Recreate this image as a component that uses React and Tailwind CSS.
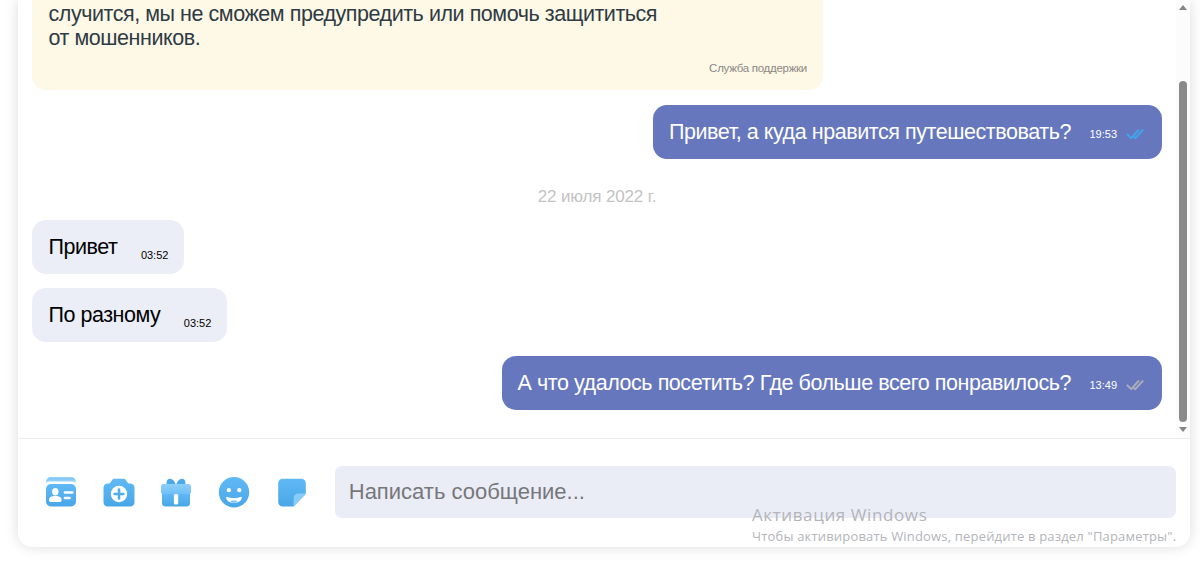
import { useState } from "react";

const supportLines = [
  "случится, мы не сможем предупредить или помочь защититься",
  "от мошенников."
];

function ProfileIcon() {
  return (
    <svg width="32" height="32" viewBox="0 0 32 32" fill="none">
      <path d="M1 6.800C1 3 2.800 1.200 6 1.200h20c3.200 0 5 1.800 5 5.600C29.800 5.900 28.200 5.600 26 5.600H6c-2.200 0-3.800.3-5 1.200Z" fill="url(#iconLight)" />
      <rect x="1" y="8" width="30" height="22.500" rx="5" fill="url(#iconBlue)" />
      <ellipse cx="10.300" cy="15.800" rx="3.200" ry="3.700" fill="#fff" />
      <path d="M4 24c0-3.200 3-4 6.300-4s6.300.8 6.300 4c0 1.600-1 2-2.400 2H6.400C5 26 4 25.600 4 24Z" fill="#fff" />
      <path d="M19.800 16.500h7.700M19.800 22h5" stroke="#fff" strokeWidth="2.300" strokeLinecap="round" />
    </svg>
  );
}

function CameraIcon() {
  return (
    <svg width="32" height="32" viewBox="0 0 32 32" fill="none">
      <path d="M11.500 2.700h9c1.300 0 2 .6 2.700 1.700l1.400 2.200c.5.700 1 1 1.900 1H27c2.800 0 4.500 1.700 4.500 4.500V26c0 2.900-1.600 4.500-4.500 4.500H5C2.100 30.500.5 28.900.5 26V12.100c0-2.800 1.700-4.500 4.500-4.500h.5c.9 0 1.400-.3 1.900-1l1.400-2.200c.7-1.100 1.400-1.700 2.700-1.700Z" fill="url(#iconBlue)" />
      <circle cx="16" cy="18" r="8.200" fill="#fff" />
      <path d="M16 13.600v8.800M11.600 18h8.800" stroke="#4eaded" strokeWidth="2.600" strokeLinecap="round" />
    </svg>
  );
}

function GiftIcon() {
  return (
    <svg width="32" height="32" viewBox="0 0 32 32" fill="none">
      <path d="M6.800 9C5.900 5.400 7.400 2.700 10 2.700c2.800 0 4.700 2.300 6 6.300 1.300-4 3.200-6.300 6-6.300 2.600 0 4.100 2.700 3.200 6.300Z" fill="#4ca9e9" />
      <path d="M2 17h28v10c0 2.300-1.200 3.500-3.500 3.500h-21C3.200 30.500 2 29.300 2 27Z" fill="url(#iconBlue)" />
      <rect x="1" y="8" width="30" height="10" rx="2.500" fill="url(#iconLid)" />
      <rect x="13.900" y="18" width="4.300" height="10.500" rx="1.500" fill="#fff" />
    </svg>
  );
}

function SmileIcon() {
  return (
    <svg width="32" height="32" viewBox="0 0 32 32" fill="none">
      <circle cx="16" cy="16.300" r="15.200" fill="url(#iconBlue)" />
      <circle cx="10.800" cy="14.200" r="2.100" fill="#fff" />
      <circle cx="21.300" cy="14.200" r="2.100" fill="#fff" />
      <path d="M8.300 20.800c2.500.9 5 1.200 7.700 1.200s5.200-.3 7.700-1.200c.5 3.900-3.400 6.300-7.700 6.300s-8.200-2.400-7.700-6.300Z" fill="#fff" />
      <path d="M12.500 25.900c.5-1.100 1.700-1.400 3.500-1.400s3 .3 3.500 1.400c-1 .6-2.100.9-3.500.9s-2.500-.3-3.500-.9Z" fill="#79c4f5" />
    </svg>
  );
}

function StickerIcon() {
  return (
    <svg width="32" height="32" viewBox="0 0 32 32" fill="none">
      <path d="M7 2.700h18c3 0 4.800 1.700 4.800 4.700v10.300L17.500 30.500H7c-3 0-4.800-1.700-4.800-4.700V7.400c0-3 1.800-4.700 4.800-4.700Z" fill="url(#iconBlue)" />
      <path d="M29.900 17.400c-.2.700-.5 1.100-1 1.600L19.300 29c-.5.600-1 1-1.700 1.400v-7.700c0-3.500 1.700-5.300 5.200-5.300Z" fill="#8accf9" />
    </svg>
  );
}

const actions = [
  { label: "Анкета", Icon: ProfileIcon },
  { label: "Фото", Icon: CameraIcon },
  { label: "Подарок", Icon: GiftIcon },
  { label: "Смайлы", Icon: SmileIcon },
  { label: "Стикеры", Icon: StickerIcon }
];

function IconGradients() {
  return (
    <svg width="0" height="0" className="absolute" aria-hidden="true">
      <defs>
        <linearGradient id="iconBlue" x1="0" y1="0" x2="0" y2="1">
          <stop stopColor="#60b9f5" />
          <stop offset="1" stopColor="#49a7e7" />
        </linearGradient>
        <linearGradient id="iconLight" x1="0" y1="0" x2="0" y2="1">
          <stop stopColor="#73c2f6" />
          <stop offset="1" stopColor="#a9dafb" />
        </linearGradient>
        <linearGradient id="iconLid" x1="0" y1="0" x2="0" y2="1">
          <stop stopColor="#8ccffb" />
          <stop offset="1" stopColor="#6fc0f7" />
        </linearGradient>
      </defs>
    </svg>
  );
}

function ReadMark({ read }) {
  return (
    <svg
      width="18"
      height="12"
      viewBox="0 0 18 12"
      fill="none"
      strokeWidth="1.900"
      className={read ? "stroke-[#42a5ec]" : "stroke-[#aaaebb]"}
    >
      <path d="M.8 5.800 5.200 10.200 13 1.500M7.400 8.500l1.900 1.700L17.200 1.500" />
    </svg>
  );
}

function OutgoingMessage({ text, time, read }) {
  return (
    <div className="flex h-[54px] items-center self-end rounded-[14px] bg-[#6677bd] pr-[18px] pb-px pl-4 text-white">
      <span className="text-[21.5px] leading-6 tracking-[-0.44px] whitespace-nowrap">{text}</span>
      <span className="mt-[5px] ml-[18.500px] text-[11px]">{time}</span>
      <span className="mt-1 ml-[9px]">
        <ReadMark read={read} />
      </span>
    </div>
  );
}

function IncomingMessage({ text, time }) {
  return (
    <div className="flex h-[54px] items-center self-start rounded-[14px] bg-[#ebeef6] pr-4 pb-px pl-[16.500px] text-black">
      <span className="text-[21.5px] leading-6 tracking-[-0.47px] whitespace-nowrap">{text}</span>
      <span className="mt-[18px] ml-[23.500px] text-[11px]">{time}</span>
    </div>
  );
}

function App() {
  const [draft, setDraft] = useState("");

  return (
    <div className="relative h-[561px] overflow-hidden bg-white px-[18px] font-['Liberation_Sans',Arial,sans-serif]">
      <IconGradients />
      <main className="flex h-[547px] w-[1172px] flex-col rounded-b-[14px] bg-white shadow-[0_0_14px_rgba(0,0,0,0.14)]">
        <div className="flex h-[438px] shrink-0">
          <section className="flex w-[1158px] flex-col px-[14px]">
            <div className="flex h-[90px] w-[791px] flex-col rounded-b-[14px] bg-[#fef8e7] pt-[2px] pr-4 pl-[16.500px] text-[#2e3b43]">
              {supportLines.map((line) => (
                <p key={line} className="text-[21.5px] leading-6 tracking-[-0.45px] whitespace-nowrap">{line}</p>
              ))}
              <p className="mt-[10px] self-end text-[11.5px] leading-4 tracking-[-0.28px] text-[#8b8985]">Служба поддержки</p>
            </div>
            <div className="mt-[15px] flex flex-col">
              <OutgoingMessage text="Привет, а куда нравится путешествовать?" time="19:53" read />
            </div>
            <p className="mt-7 text-center text-[17px] leading-5 tracking-[-0.15px] text-[#c3c3c5]">22 июля 2022 г.</p>
            <div className="mt-[13px] flex flex-col gap-[14px]">
              <IncomingMessage text="Привет" time="03:52" />
              <IncomingMessage text="По разному" time="03:52" />
              <OutgoingMessage text="А что удалось посетить? Где больше всего понравилось?" time="13:49" />
            </div>
          </section>
          <div className="flex w-[14px] flex-col items-center bg-[#fcfcfc]">
            <svg width="10" height="6" viewBox="0 0 10 6" className="mt-[5px] shrink-0 fill-[#858585]">
              <path d="M5 0 9 5H1Z" />
            </svg>
            <div className="mt-[70px] h-[341px] w-2 shrink-0 rounded-full bg-[#8a8a8a]" />
            <svg width="10" height="6" viewBox="0 0 10 6" className="mt-[5px] fill-[#858585]">
              <path d="M1 0h8L5 5Z" />
            </svg>
          </div>
        </div>
        <form className="flex h-[109px] items-center border-t border-[#ebebed] pr-[14px] pb-[2px] pl-[27px]">
          <div className="flex gap-[25.7px]">
            {actions.map(({ label, Icon }) => (
              <button key={label} type="button" aria-label={label}>
                <Icon />
              </button>
            ))}
          </div>
          <input
            value={draft}
            onChange={(event) => setDraft(event.target.value)}
            placeholder="Написать сообщение..."
            className="ml-[27px] h-[52px] min-w-0 flex-1 rounded-[7px] bg-[#ebedf6] px-[14px] text-[22px] outline-none placeholder:text-[#77777b]"
          />
        </form>
      </main>
      <div className="pointer-events-none absolute top-[504px] left-[752px] font-['Open_Sans','Noto_Sans',sans-serif] whitespace-nowrap text-[#b3b5ba]">
        <p className="text-[17px] leading-[22px] font-medium tracking-[0.6px]">Активация Windows</p>
        <p className="text-[13px] leading-5 font-medium tracking-[0.18px]">Чтобы активировать Windows, перейдите в раздел "Параметры".</p>
      </div>
    </div>
  );
}

export default App;
